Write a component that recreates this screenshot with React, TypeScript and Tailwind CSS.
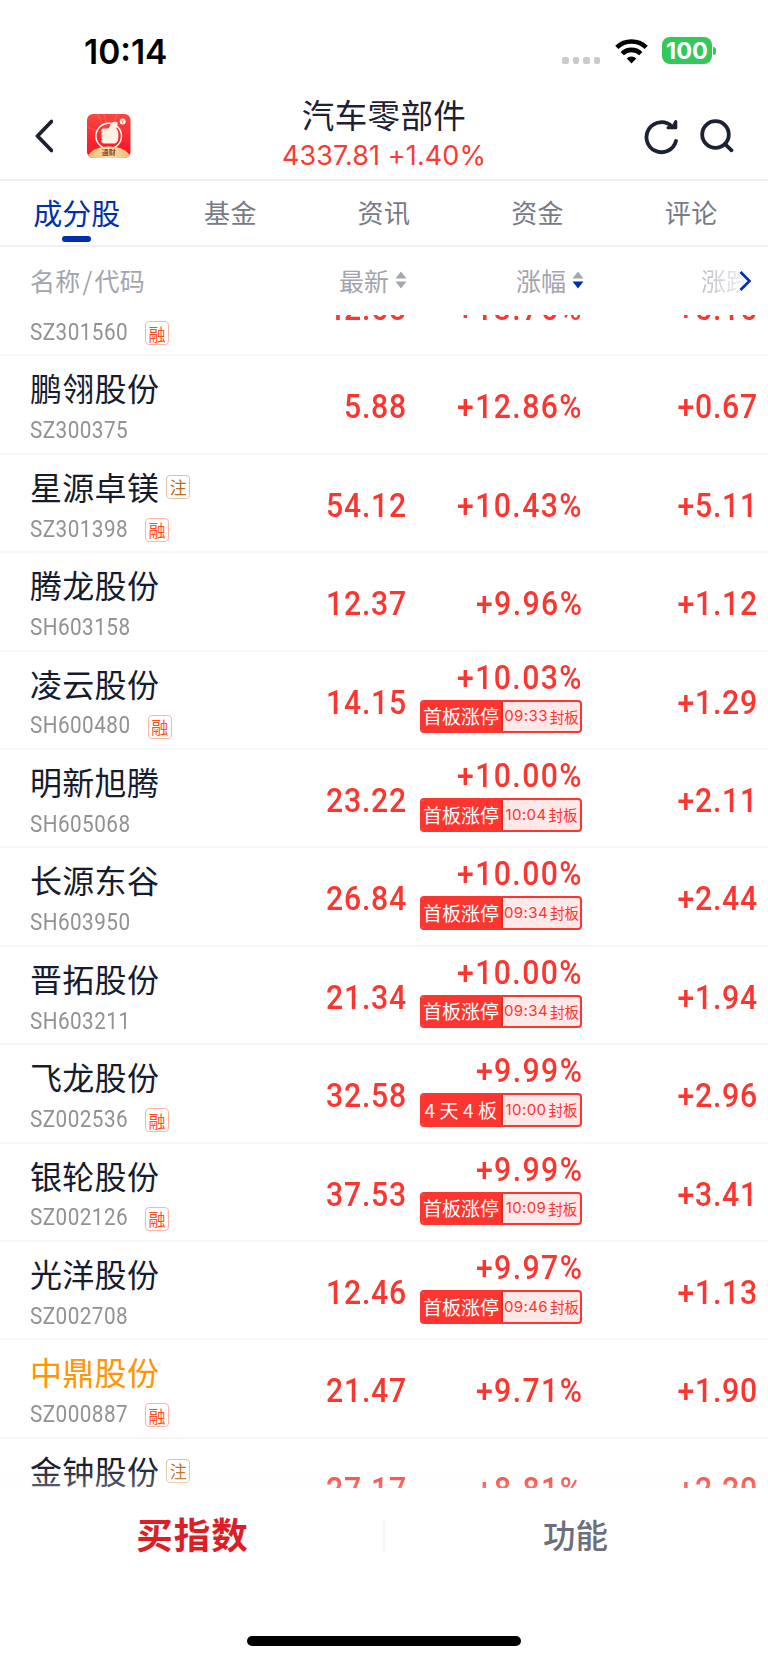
import { clsx } from "clsx";

type Stock = {
  name: string;
  code: string;
  price: string;
  percent: string;
  change: string;
  margin?: boolean;
  registered?: boolean;
  held?: boolean;
  limit?: { label: string; time: string };
};

const stocks: Stock[] = [
  { name: "众捷汽车", code: "SZ301560", price: "42.68", percent: "+13.76%", change: "+5.16", margin: true },
  { name: "鹏翎股份", code: "SZ300375", price: "5.88", percent: "+12.86%", change: "+0.67" },
  { name: "星源卓镁", code: "SZ301398", price: "54.12", percent: "+10.43%", change: "+5.11", margin: true, registered: true },
  { name: "腾龙股份", code: "SH603158", price: "12.37", percent: "+9.96%", change: "+1.12" },
  { name: "凌云股份", code: "SH600480", price: "14.15", percent: "+10.03%", change: "+1.29", margin: true, limit: { label: "首板涨停", time: "09:33" } },
  { name: "明新旭腾", code: "SH605068", price: "23.22", percent: "+10.00%", change: "+2.11", limit: { label: "首板涨停", time: "10:04" } },
  { name: "长源东谷", code: "SH603950", price: "26.84", percent: "+10.00%", change: "+2.44", limit: { label: "首板涨停", time: "09:34" } },
  { name: "晋拓股份", code: "SH603211", price: "21.34", percent: "+10.00%", change: "+1.94", limit: { label: "首板涨停", time: "09:34" } },
  { name: "飞龙股份", code: "SZ002536", price: "32.58", percent: "+9.99%", change: "+2.96", margin: true, limit: { label: "4天4板", time: "10:00" } },
  { name: "银轮股份", code: "SZ002126", price: "37.53", percent: "+9.99%", change: "+3.41", margin: true, limit: { label: "首板涨停", time: "10:09" } },
  { name: "光洋股份", code: "SZ002708", price: "12.46", percent: "+9.97%", change: "+1.13", limit: { label: "首板涨停", time: "09:46" } },
  { name: "中鼎股份", code: "SZ000887", price: "21.47", percent: "+9.71%", change: "+1.90", margin: true, held: true },
  { name: "金钟股份", code: "SZ301133", price: "27.17", percent: "+8.81%", change: "+2.20", registered: true },
];

const tabs = ["成分股", "基金", "资讯", "资金", "评论"];

function StatusBar() {
  return (
    <div className="flex h-[91px] items-start pl-[84px] pr-[52px] pt-[33px]">
      <span className="pt-px font-['Inter'] text-[33.5px] leading-9 font-semibold text-black">
        10:14
      </span>
      <div className="ml-auto flex pt-1">
        <div className="mt-5 mr-[15px] flex gap-1">
          {[0, 1, 2, 3].map((i) => (
            <span key={i} className="size-[6.5px] rounded-[2px] bg-[#cacaca]" />
          ))}
        </div>
        <svg width="33" height="25" viewBox="0 0 33 25" className="mt-[2px] mr-[14px]">
          <g fill="none" stroke="#000" strokeWidth="4.6">
            <path d="M1.8 8.4a21.4 21.4 0 0 1 29.4 0" />
            <path d="M7.2 14.6a13.4 13.4 0 0 1 18.6 0" />
          </g>
          <path d="M11.7 19.5a7 7 0 0 1 9.6 0L16.5 24.5Z" />
        </svg>
        <div className="flex h-[27px] w-[50px] items-center justify-center rounded-[8px] bg-[#34c759] pt-px font-['Inter'] text-[23.5px] font-bold text-white">
          100
        </div>
        <span className="mt-[10px] ml-px h-[8px] w-[3px] rounded-r-full bg-[#34c759]" />
      </div>
    </div>
  );
}

function Logo() {
  return (
    <svg width="44" height="44" viewBox="0 0 44 44" className="mt-px ml-[34px]">
      <defs>
        <linearGradient id="logoRed" x1="0" y1="0" x2="0" y2="1">
          <stop offset="0" stopColor="#f9483f" />
          <stop offset="1" stopColor="#f90f25" />
        </linearGradient>
        <linearGradient id="logoGold" x1="0" y1="0" x2="1" y2="0">
          <stop offset="0" stopColor="#eeb867" />
          <stop offset="0.5" stopColor="#fae0ae" />
          <stop offset="1" stopColor="#eeb867" />
        </linearGradient>
        <clipPath id="logoClip">
          <rect width="43.5" height="44" rx="6" />
        </clipPath>
      </defs>
      <g clipPath="url(#logoClip)">
        <rect width="44" height="44" fill="url(#logoRed)" />
        <path d="M22 22 9 0h3ZM22 22 29 0h2ZM22 22 0 12v2ZM22 22 16 0h2Z" fill="#fff" opacity=".1" />
        <circle cx="21.7" cy="22" r="12.8" fill="none" stroke="#fff" strokeWidth="1.5" />
        <path
          d="M14.5 16c0-1 1-1.500 2-1.500h4.500c1.500-1 2-2.500 2.300-4 .4-2 2.500-2.800 5.200-2.800 2 0 2.500 1 2 3l-1.200 4c1.500 1 2 3 2 5.500v3c0 4-1.500 6.300-5 6.300h-9c-2 0-3-1-3-2.500Z"
          fill="#fff1e4"
        />
        <path d="M14 18.5h1.500M14 22h1.500M14 25.500h1.500" stroke="#f5323a" strokeWidth=".8" />
        <circle cx="35.7" cy="7.5" r="2.9" fill="#fff" />
        <path d="m34.500 6.300 1.200 1.200 1.200-1.200M35.700 7.500v2" stroke="#f5323a" strokeWidth=".7" fill="none" />
        <path d="M0 43c4-7 11-10.500 22-10.500S40 36 44 43v2H0Z" fill="url(#logoGold)" />
        <text x="21.8" y="41" textAnchor="middle" className="font-['Noto_Sans_CJK_SC',sans-serif] font-bold" fontSize="7" fill="#8b4a1b">
          通财
        </text>
      </g>
    </svg>
  );
}

function NavBar() {
  return (
    <div className="flex h-[90px] items-center border-b-2 border-[#efeff1] pl-[35px] pr-[34px] text-[#1d2133]">
      <svg width="18" height="36" viewBox="0 0 18 36" className="mt-px" fill="none" stroke="currentColor" strokeWidth="3.8" strokeLinecap="round" strokeLinejoin="round">
        <path d="M16.5 3.5 2.5 18l14 14.5" />
      </svg>
      <Logo />
      <div className="-mt-[2px] ml-[131px] flex w-[244px] flex-col items-center">
        <h1 className="text-[32.5px] leading-[43px] tracking-[0.4px] whitespace-nowrap">汽车零部件</h1>
        <p className="font-['Inter'] text-[27px] leading-[41px] tracking-[0.1px] whitespace-nowrap text-[#fb3a33]">
          4337.81 +1.40%
        </p>
      </div>
      <div className="mt-px ml-auto flex gap-[19px]">
        <svg width="36" height="38" viewBox="0 0 36 38" fill="none" stroke="currentColor" strokeWidth="3.8" strokeLinecap="round" strokeLinejoin="round">
          <path d="M29 9.500A15 15 0 1 0 33 24" />
          <path d="M32.8 4.500V10.800H25L30.500 9Z" fill="currentColor" strokeWidth="3" />
        </svg>
        <svg width="36" height="38" viewBox="0 0 36 38" fill="none" stroke="currentColor" strokeWidth="3.8" strokeLinecap="round">
          <circle cx="17.5" cy="17.5" r="13.3" />
          <path d="m27.500 27.500 6 5.800" />
        </svg>
      </div>
    </div>
  );
}

function Tabs() {
  return (
    <div className="grid h-[66px] grid-cols-5 border-b-2 border-[#f0f0f2]">
      {tabs.map((tab, i) => (
        <div key={tab} className="flex flex-col items-center pt-[7px]">
          <span
            className={clsx(
              "leading-[48px]",
              i === 0 ? "text-[29px] text-[#0030ae]" : "text-[26px] tracking-[0.4px] text-[#777a87]",
            )}
          >
            {tab}
          </span>
          {i === 0 && <span className="h-[6px] w-[29px] rounded-full bg-[#0030ae]" />}
        </div>
      ))}
    </div>
  );
}

function SortIcon({ desc = false }: { desc?: boolean }) {
  return (
    <svg width="12" height="18" viewBox="0 0 12 18" className="mt-px ml-[6px]">
      <path d="M6 .5 11.5 7.500H.5Z" fill="#a5a7b0" />
      <path d="M6 17.500.5 10.500h11Z" fill={desc ? "#0030ae" : "#a5a7b0"} />
    </svg>
  );
}

function TableHead() {
  return (
    <div className="flex h-[68px] items-center pb-[3px] pl-[30px] text-[25px] leading-9 text-[#a3a5ae]">
      <span className="w-[210px] tracking-[0.3px]">名称&#8202;/&#8202;代码</span>
      <div className="flex w-[167px] items-center justify-end">
        最新
        <SortIcon />
      </div>
      <div className="flex w-[177px] items-center justify-end">
        涨幅
        <SortIcon desc />
      </div>
      <div className="ml-[117px] flex items-center">
        <span className="bg-linear-to-r from-[#bcbdc4] to-[#fafafa] bg-clip-text text-transparent">
          涨跌
        </span>
        <svg width="13" height="22" viewBox="0 0 13 22" className="mt-[2px] -ml-[12px]" fill="none" stroke="#0030ae" strokeWidth="2.6">
          <path d="m1.5 2 9 9-9 9" />
        </svg>
      </div>
    </div>
  );
}

function Badge({ text, className }: { text: string; className: string }) {
  return (
    <span
      className={clsx(
        "flex size-6 items-center justify-center rounded-[4px] border-[1.5px] text-[17px] leading-none",
        className,
      )}
    >
      {text}
    </span>
  );
}

function StockRow({ stock }: { stock: Stock }) {
  const number = "origin-right scale-x-90 font-['Roboto'] text-[33.5px] leading-9 font-medium";
  return (
    <div className="flex h-[98.42px] shrink-0 border-b-2 border-[#f7f7f8] pl-[30px] text-[#fb352f]">
      <div className="w-[260px] pt-[7px]">
        <div className="flex h-[48px] items-center">
          <span
            className={clsx(
              "text-[32px] leading-[48px] tracking-[0.3px]",
              stock.held ? "text-[#ff9500]" : "text-[#171b2e]",
            )}
          >
            {stock.name}
          </span>
          {stock.registered && (
            <Badge text="注" className="mt-[2px] ml-[7px] border-[#e3c39f] text-[#b96a1c]" />
          )}
        </div>
        <div className="mt-[4px] flex h-[32px] items-center">
          <span className="origin-left scale-x-90 font-['Roboto'] text-[23px] tracking-[0.5px] text-[#929292]">
            {stock.code}
          </span>
          {stock.margin && (
            <Badge text="融" className="ml-[6px] border-[#ffb5a1] text-[#ff4d1c]" />
          )}
        </div>
      </div>
      <div className={clsx("w-[117px] pt-[33px] text-right tracking-[0.9px]", number)}>
        {stock.price}
      </div>
      <div className="flex w-[176px] flex-col items-end pr-px">
        <span className={clsx(number, "-mr-px tracking-[1.6px]", stock.limit ? "mt-[8px]" : "mt-[33px]")}>
          {stock.percent}
        </span>
        {stock.limit && (
          <div className="mt-[4px] flex h-[33.5px] w-[162px] overflow-hidden rounded-[4px] border-2 border-[#fb352f] bg-[#ffe8e8]">
            <span
              className={clsx(
                "flex w-[81px] shrink-0 items-center justify-center border-r-2 border-[#e52b26] bg-[#fb352f] text-[19px] whitespace-nowrap text-white",
                stock.limit.label === "4天4板" ? "pl-[3px] tracking-[4.5px]" : "pr-px",
              )}
            >
              {stock.limit.label}
            </span>
            <span className="flex flex-1 items-center justify-center whitespace-nowrap">
              <span className="font-['Inter'] text-[15px] tracking-[0.4px]">
                {stock.limit.time}
              </span>
              <span className="ml-[2px] text-[14.5px]">封板</span>
            </span>
          </div>
        )}
      </div>
      <div className={clsx("w-[175px] pt-[33px] text-right tracking-[0.9px]", number)}>
        {stock.change}
      </div>
    </div>
  );
}

function BottomBar() {
  return (
    <div className="flex h-[175px] flex-col bg-white">
      <div className="flex h-[92px] items-center">
        <div className="flex-1 pl-[2px] text-center text-[36.5px] font-bold tracking-[1px] text-[#dc1f26]">
          买指数
        </div>
        <span className="mt-1 h-8 w-[2px] bg-[#f3f3f9]" />
        <div className="flex-1 pr-[2px] text-center text-[32.5px] font-medium text-[#6b6e7b]">功能</div>
      </div>
      <div className="mx-auto mt-[56px] h-[10px] w-[274px] rounded-full bg-black" />
    </div>
  );
}

export default function App() {
  return (
    <main className="flex h-[1663px] w-[768px] flex-col overflow-hidden bg-white font-['Noto_Sans_CJK_SC',sans-serif]">
      <StatusBar />
      <NavBar />
      <Tabs />
      <TableHead />
      <div className="relative flex min-h-0 flex-1 flex-col overflow-hidden">
        <div className="-mt-[57px] flex flex-col">
          {stocks.map((stock) => (
            <StockRow key={stock.code} stock={stock} />
          ))}
        </div>
        <div className="absolute inset-x-0 bottom-0 h-6 bg-linear-to-b from-transparent to-[#fafafc]/30" />
      </div>
      <BottomBar />
    </main>
  );
}
